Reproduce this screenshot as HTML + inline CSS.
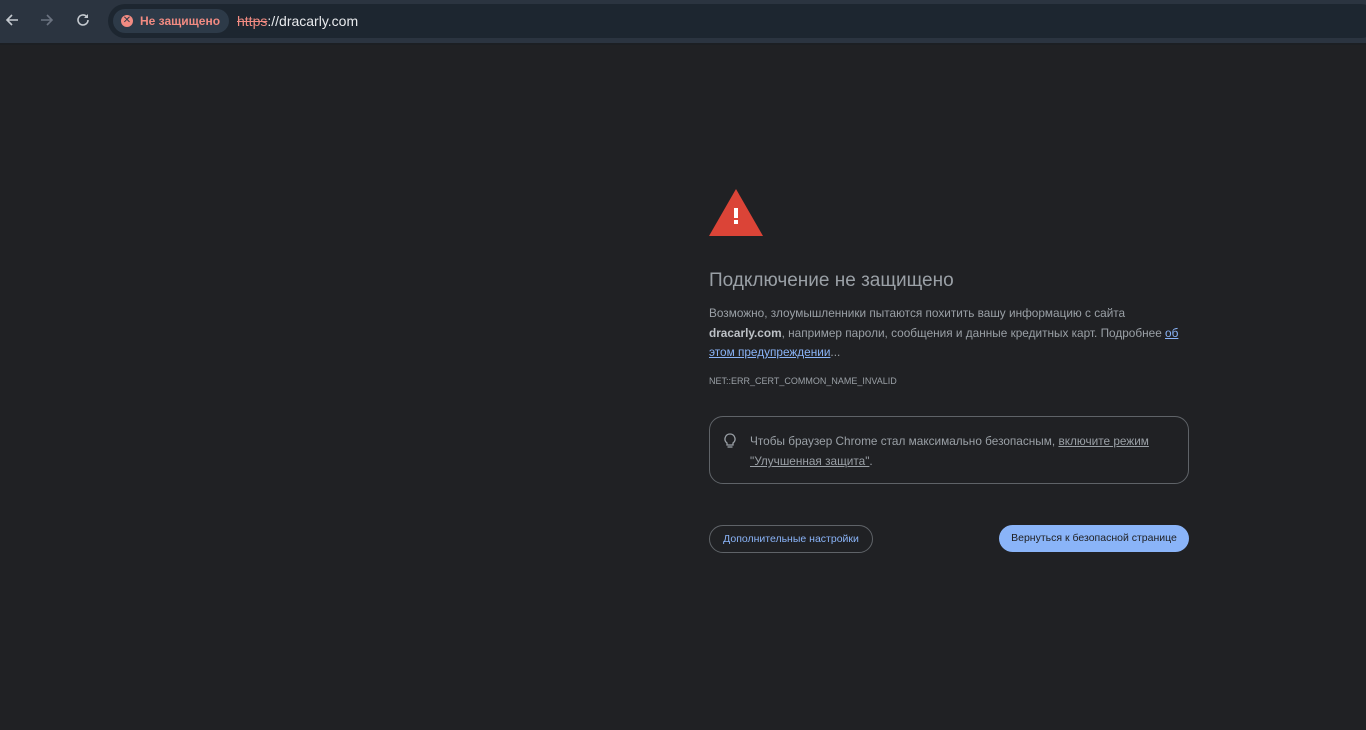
<!DOCTYPE html>
<html><head><meta charset="utf-8"><style>
*{margin:0;padding:0;box-sizing:border-box}
body{width:1366px;height:730px;background:#202124;font-family:"Liberation Sans","DejaVu Sans",sans-serif;overflow:hidden;position:relative;color:#9aa0a6}
.tb{position:absolute;left:0;top:0;width:1366px;height:43px;background:#2b3440}
.line{position:absolute;left:0;top:43px;width:1366px;height:2px;background:#1c1f23}
.omni{position:absolute;left:108px;top:4px;width:1270px;height:34px;border-radius:17px;background:#1d2630}
.chip{position:absolute;left:113px;top:9px;width:116px;height:24px;border-radius:12px;background:#2d3a48;color:#f28b82;font-size:12px;font-weight:bold;line-height:24px;padding-left:27px}
.chip .x{position:absolute;left:8px;top:6px;width:12px;height:12px;border-radius:6px;background:#f28b82;color:#2d3a48;font-size:10px;line-height:12px;text-align:center}
.url{position:absolute;left:237px;top:13px;font-size:14px;color:#e8eaed}
.url s{color:#f28b82;text-decoration-color:#f28b82}
.ic{position:absolute;top:11px;color:#c4c9cf;font-size:18px;line-height:20px}
h1{position:absolute;left:709px;top:270px;font-size:19px;font-weight:normal;color:#9aa0a6}
.p{position:absolute;left:709px;top:304px;width:480px;font-size:11.8px;line-height:19.5px;color:#9aa0a6}
.p b{color:#bdc1c6}
a{color:#8ab4f8;text-decoration:underline}
.code{position:absolute;left:709px;top:376px;font-size:9px;color:#9aa0a6}
.box{position:absolute;left:709px;top:416px;width:480px;height:68px;border:1px solid #5f6368;border-radius:14px}
.box .t{position:absolute;left:40px;top:14px;font-size:11.8px;line-height:20px;color:#9aa0a6}
.box .t u{color:#9aa0a6}
.b1{position:absolute;left:709px;top:525px;width:164px;height:28px;border:1px solid #5f6368;border-radius:14px;color:#8ab4f8;font-size:10.5px;line-height:26px;text-align:center}
.b2{position:absolute;left:999px;top:525px;width:190px;height:27px;border-radius:14px;background:#8ab4f8;color:#202124;font-size:10.5px;line-height:27px;text-align:center}
</style></head><body>
<div class="tb"></div><div class="line"></div>
<svg class="ic" style="left:4px;top:12px" width="16" height="16" viewBox="0 0 16 16"><path d="M14 8H3M8 3L3 8l5 5" stroke="#c4c9cf" stroke-width="1.6" fill="none"/></svg>
<svg class="ic" style="left:39px;top:12px" width="16" height="16" viewBox="0 0 16 16"><path d="M2 8h11M8 3l5 5-5 5" stroke="#6b7380" stroke-width="1.6" fill="none"/></svg>
<svg class="ic" style="left:75px;top:12px" width="16" height="16" viewBox="0 0 16 16"><path d="M13 8a5 5 0 1 1-1.5-3.6" stroke="#c4c9cf" stroke-width="1.6" fill="none"/><path d="M13 2v4H9z" fill="#c4c9cf"/></svg>
<div class="omni"></div>
<div class="chip"><span class="x">✕</span>Не защищено</div>
<div class="url"><s>https</s>://dracarly.com</div>
<svg style="position:absolute;left:709px;top:189px" width="54" height="47" viewBox="0 0 54 47"><path d="M27 0L54 47H0z" fill="#db4437"/><rect x="25" y="19" width="4" height="10" fill="#fff"/><rect x="25" y="31" width="4" height="4" fill="#fff"/></svg>
<h1>Подключение не защищено</h1>
<div class="p">Возможно, злоумышленники пытаются похитить вашу информацию с сайта <b>dracarly.com</b>, например пароли, сообщения и данные кредитных карт. Подробнее <a>об этом предупреждении</a>...</div>
<div class="code">NET::ERR_CERT_COMMON_NAME_INVALID</div>
<div class="box">
<svg style="position:absolute;left:14px;top:16px" width="12" height="16" viewBox="0 0 12 16"><path d="M6 1a5 5 0 0 0-3 9v2h6v-2a5 5 0 0 0-3-9z" stroke="#9aa0a6" stroke-width="1.3" fill="none"/><path d="M3.5 14h5" stroke="#9aa0a6" stroke-width="1.3"/></svg>
<div class="t">Чтобы браузер Chrome стал максимально безопасным, <u>включите режим</u><br><u>"Улучшенная защита"</u>.</div></div>
<div class="b1">Дополнительные настройки</div>
<div class="b2">Вернуться к безопасной странице</div>
</body></html>
